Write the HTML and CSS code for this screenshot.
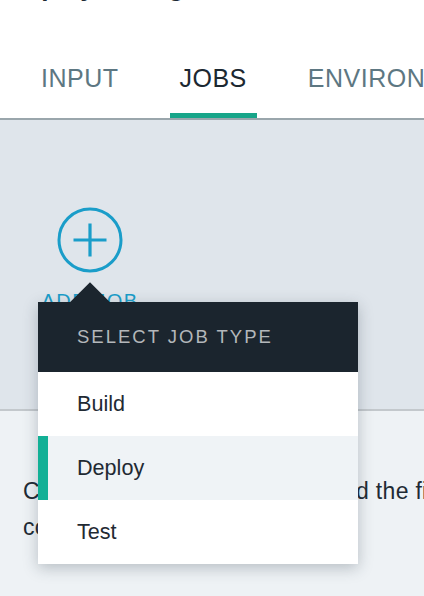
FILE: index.html
```html
<!DOCTYPE html>
<html>
<head>
<meta charset="utf-8">
<link rel="stylesheet" href="styles.css">
</head>
<body>
<div class="page">
  <header class="header">
    <h1 class="title">Deploy Config</h1>
    <nav class="tabs">
      <div class="tab">INPUT</div>
      <div class="tab active">JOBS</div>
      <div class="tab">ENVIRONMENT PROPERTIES</div>
    </nav>
  </header>
  <section class="jobs-area">
    <div class="add-job">
      <svg class="add-icon" width="66" height="66" viewBox="0 0 66 66">
        <circle cx="33" cy="33" r="31" fill="none" stroke="#1a9dc9" stroke-width="3"/>
        <path d="M33 16.5 V49.5 M16.5 33 H49.5" stroke="#1a9dc9" stroke-width="3.2" fill="none"/>
      </svg>
      <div class="add-label">ADD JOB</div>
    </div>
  </section>
  <section class="info">
    <p class="info-text">Click Add Job to create a job and the first commands it runs.</p>
  </section>

  <div class="menu">
    <div class="menu-arrow"></div>
    <div class="menu-head">SELECT JOB TYPE</div>
    <div class="menu-item">Build</div>
    <div class="menu-item selected">Deploy</div>
    <div class="menu-item">Test</div>
  </div>
</div>
</body>
</html>
```
FILE: styles.css
```css
html, body {
  margin: 0;
  padding: 0;
}
body {
  width: 424px;
  height: 596px;
  overflow: hidden;
  font-family: "Liberation Sans", Arial, sans-serif;
  background: #eef2f5;
}
.page {
  position: relative;
  width: 424px;
  height: 596px;
  overflow: hidden;
}
.header {
  background: #ffffff;
  height: 118px;
  border-bottom: 2px solid #9aa6ac;
  position: relative;
  overflow: hidden;
}
.title {
  margin: -28px 0 0 8px;
  font-size: 26px;
  font-weight: bold;
  line-height: 30px;
  height: 30px;
  color: #1d2a33;
  white-space: nowrap;
}
.tabs {
  display: flex;
  gap: 41px;
  padding-left: 31px;
  margin-top: 57px;
  white-space: nowrap;
}
.tab {
  padding: 4px 10px 0;
  height: 59px;
  box-sizing: border-box;
  font-size: 25px;
  letter-spacing: 0.5px;
  line-height: 30px;
  color: #5d7782;
  border-bottom: 5px solid transparent;
}
.tab.active {
  color: #1c2831;
  border-bottom-color: #17a589;
}
.jobs-area {
  background: #dfe5eb;
  border-bottom: 2px solid #c3c8cc;
  padding-left: 57px;
  padding-top: 87px;
  box-sizing: border-box;
  height: 291px;
}
.add-job {
  width: 66px;
  display: flex;
  flex-direction: column;
  align-items: center;
}
.add-icon {
  display: block;
}
.add-label {
  margin-top: 17px;
  font-size: 20px;
  letter-spacing: 1.5px;
  color: #1a9dc9;
  white-space: nowrap;
}
.info {
  padding: 62px 0 0 23px;
}
.info-text {
  margin: 0;
  width: 470px;
  font-size: 23px;
  letter-spacing: 0.3px;
  line-height: 36px;
  color: #1f2b34;
}
.menu {
  position: absolute;
  left: 38px;
  top: 302px;
  width: 320px;
  background: #ffffff;
  box-shadow: 0 4px 14px rgba(40, 55, 70, 0.28);
}
.menu-arrow {
  position: absolute;
  left: 38px;
  top: -14px;
  width: 28px;
  height: 28px;
  background: #1b252e;
  transform: rotate(45deg);
}
.menu-head {
  position: relative;
  background: #1b252e;
  height: 70px;
  box-sizing: border-box;
  padding: 24px 0 0 39px;
  font-size: 18.5px;
  letter-spacing: 2px;
  line-height: 22px;
  color: #b3b7ba;
}
.menu-item {
  height: 64px;
  box-sizing: border-box;
  padding: 19px 0 0 29px;
  font-size: 21.6px;
  line-height: 26px;
  color: #1f2a33;
  border-left: 10px solid transparent;
}
.menu-item.selected {
  background: #eff3f6;
  border-left-color: #12b096;
}
```
